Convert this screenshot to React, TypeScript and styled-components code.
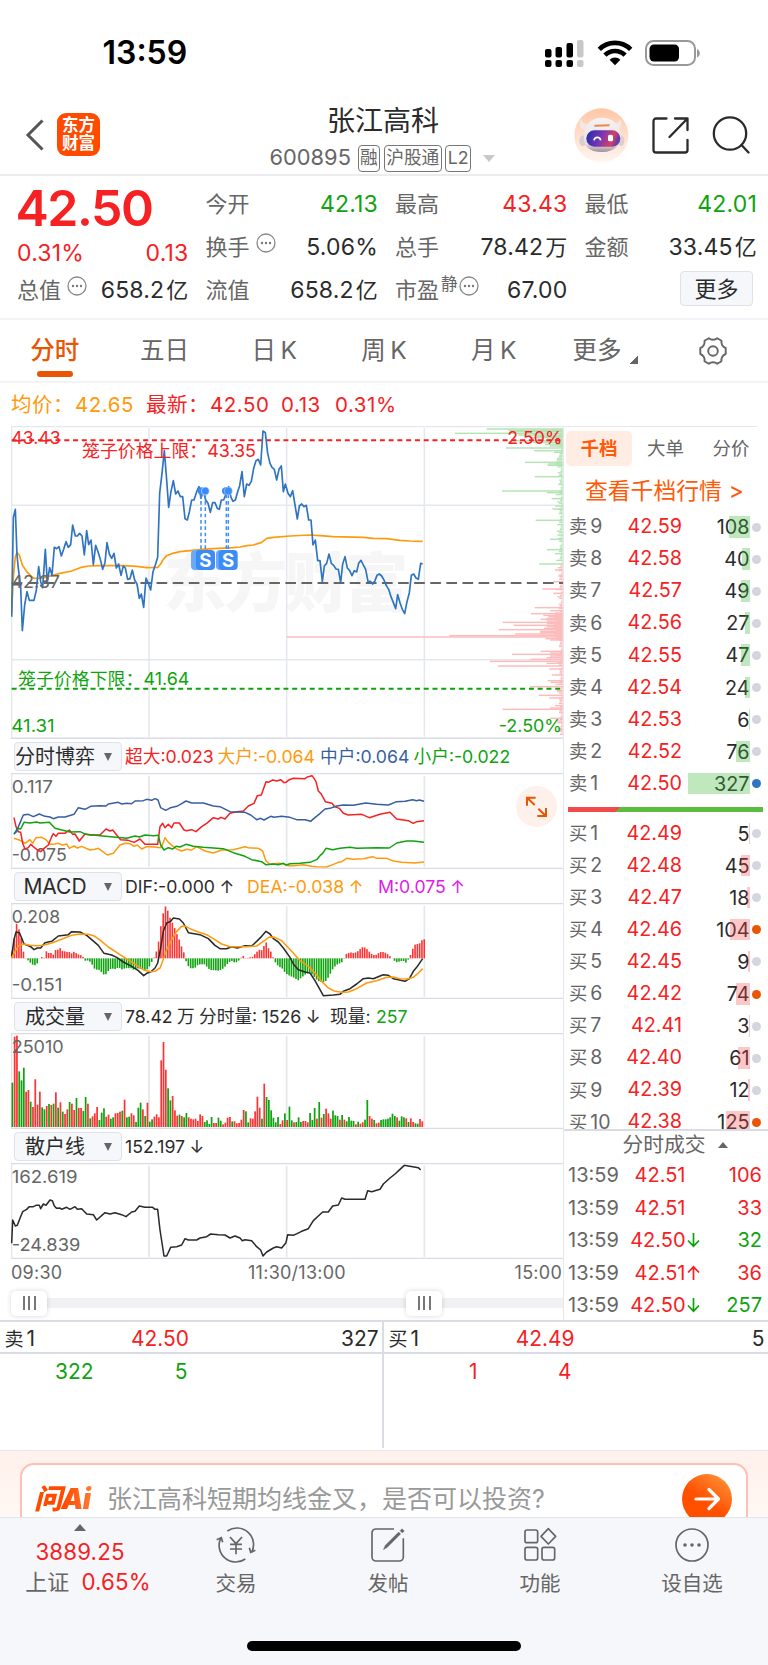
import React from "react";
import styled, { createGlobalStyle, css } from "styled-components";

const RED = "#f62122";
const GREEN = "#0fa30f";
const ORANGE = "#ea5504";
const AMBER = "#ff9a0d";
const BLUE = "#2f74c0";
const NAVY = "#375f9f";
const GREY = "#666666";
const INK = "#2b2b2b";
const GRID = "#e3e7ee";
const LINE = "#d9dce4";

const FONT = `Inter, "Noto Sans CJK SC", sans-serif`;

const Global = createGlobalStyle`
  *, *::before, *::after { box-sizing: border-box; }
  body {
    margin: 0;
    background: #fff;
    font-family: ${FONT};
    line-height: 1;
    color: ${INK};
    white-space: nowrap;
  }
  svg { display: block; }
  svg text { font-family: ${FONT}; }
`;

const Screen = styled.div`
  width: 768px;
  height: 1665px;
  display: flex;
  flex-direction: column;
  overflow: hidden;
  background: #fff;
`;

/* ---------- status bar ---------- */
const StatusBar = styled.div`
  height: 100px;
  flex: none;
  display: flex;
  align-items: center;
  padding: 5px 67px 0 102.5px;
`;
const Clock = styled.div`
  font-size: 32px;
  font-weight: 600;
  letter-spacing: 0;
  flex: 1;
  color: #000;
`;

/* ---------- title bar ---------- */
const TitleBar = styled.header`
  height: 76px;
  flex: none;
  display: grid;
  grid-template-columns: 232px 1fr 232px;
  border-bottom: 2px solid #ececec;
`;
const TitleLeft = styled.div`
  display: flex;
  align-items: center;
  gap: 13px;
  padding: 0 0 4px 25px;
`;
const Brand = styled.div`
  width: 43px;
  height: 43px;
  border-radius: 9px;
  background: #ff4a00;
  color: #fff;
  font-size: 16.5px;
  font-weight: 700;
  line-height: 17.5px;
  text-align: center;
  padding-top: 4px;
  margin-top: -1px;
`;
const TitleMid = styled.div`
  display: flex;
  flex-direction: column;
  align-items: center;
  padding: 6px 2px 0 0;
`;
const StockName = styled.h1`
  margin: 0;
  font-size: 28px;
  font-weight: 400;
  line-height: 30px;
`;
const StockMeta = styled.div`
  display: flex;
  align-items: center;
  height: 28px;
  margin-top: 8px;
  gap: 3.5px;
  padding-right: 2px;
  color: ${GREY};
`;
const Code = styled.span`
  font-size: 21.8px;
  letter-spacing: 0.05px;
  margin-right: 3px;
`;
const Tag = styled.span`
  height: 27px;
  padding: 0 1.5px;
  display: flex;
  align-items: center;
  border: 1.5px solid #777;
  border-radius: 4px;
  font-size: 17.7px;
`;
const Caret = styled.i<{ $w: number; $h: number; $up?: boolean; $c?: string }>`
  width: 0;
  height: 0;
  flex: none;
  border: solid transparent;
  border-width: 0 ${(p) => p.$w / 2}px;
  ${(p) =>
    p.$up
      ? css`border-bottom: ${p.$h}px solid ${p.$c || GREY};`
      : css`border-top: ${p.$h}px solid ${p.$c || GREY};`}
`;
const MetaCaret = styled(Caret)`
  margin-left: 8px;
`;
const TitleRight = styled.div`
  display: grid;
  grid-template-columns: 55px 37px 38px;
  align-items: center;
  justify-content: end;
  column-gap: 23px;
  padding: 0 18px 4px 0;
`;

/* ---------- quote panel ---------- */
const Quote = styled.section`
  height: 144px;
  flex: none;
  display: grid;
  grid-template-columns: 171.5px repeat(3, 172.5px);
  column-gap: 17px;
  padding: 6.5px 0 0 17px;
  border-bottom: 2px solid #f3f3f5;
`;
const QuoteCol = styled.div`
  display: grid;
  grid-template-rows: repeat(3, 43px);
`;
const QuoteCell = styled.div<{ $low?: boolean }>`
  display: flex;
  align-items: center;
  font-size: 22px;
  color: ${GREY};
  padding-top: ${(p) => (p.$low ? 13 : 0)}px;
`;
const Last = styled.div`
  color: ${RED};
  font-size: 50px;
  font-weight: 600;
  letter-spacing: -1.5px;
  margin-left: -1.5px;
`;
const Val = styled.span<{ $c?: string; $left?: boolean }>`
  margin-left: ${(p) => (p.$left ? 0 : "auto")};
  color: ${(p) => p.$c || INK};
  font-size: 23px;
  letter-spacing: 0.2px;
`;
const Unit = styled.span`
  margin-left: 2px;
  font-size: 22px;
`;
const Sup = styled.sup`
  font-size: 16.5px;
  line-height: 1;
  margin: -12px -5px 0 2px;
`;
const HintWrap = styled.span`
  margin: -9px 0 0 6px;
`;
const MoreButton = styled.button`
  margin-left: auto;
  margin-right: 4px;
  margin-top: -3px;
  width: 73px;
  height: 35px;
  border: 1.5px solid #dfe2e8;
  border-radius: 4px;
  background: #f6f7fa;
  font: 22px ${FONT};
  line-height: 1;
  padding: 0;
  color: ${INK};
`;

/* ---------- period tabs ---------- */
const Tabs = styled.nav`
  height: 63px;
  flex: none;
  display: grid;
  grid-template-columns: repeat(7, 1fr);
  border-bottom: 2px solid #f3f3f5;
`;
const Tab = styled.div<{ $on?: boolean }>`
  display: flex;
  align-items: center;
  justify-content: center;
  position: relative;
  font-size: 24.5px;
  word-spacing: -2.5px;
  color: ${(p) => (p.$on ? ORANGE : GREY)};
  font-weight: ${(p) => (p.$on ? 500 : 400)};
  ${(p) =>
    p.$on &&
    css`
      &::after {
        content: "";
        position: absolute;
        left: 37px;
        bottom: 4px;
        width: 36px;
        height: 6px;
        border-radius: 3px;
        background: ${ORANGE};
      }
    `}
`;
const Corner = styled.i`
  width: 8px;
  height: 8px;
  margin: 18px -4px 0 9px;
  background: linear-gradient(135deg, transparent 50%, ${GREY} 50%);
`;

const Summary = styled.div`
  height: 43px;
  flex: none;
  display: flex;
  align-items: center;
  padding: 1px 0 0 11px;
  font-size: 20.5px;
  letter-spacing: 0.55px;
  color: ${RED};
`;
const SumItem = styled.span<{ $w: number; $c?: string }>`
  width: ${(p) => p.$w}px;
  color: ${(p) => p.$c || RED};
`;

/* ---------- main area ---------- */
const Main = styled.main`
  height: 896px;
  flex: none;
  display: grid;
  grid-template-columns: 563px 205px;
  border-bottom: 2px solid ${LINE};
`;
const Charts = styled.div`
  position: relative;
  padding-left: 11px;
  display: flex;
  flex-direction: column;
`;
const PaneHead = styled.div`
  height: 34px;
  display: flex;
  align-items: center;
  padding: 2px 0 0 3px;
  font-size: 17.7px;
`;
const Picker = styled.div<{ $size: number }>`
  width: 108px;
  height: 29px;
  margin: -1px 3px 0 0;
  display: grid;
  grid-template-columns: 80px 25px;
  align-items: center;
  justify-items: center;
  background: #f6f7fa;
  border: 1.5px solid #dfe2e8;
  border-radius: 4px;
  font-size: ${(p) => p.$size}px;
`;
const Stat = styled.span<{ $c?: string; $w?: number }>`
  color: ${(p) => p.$c || INK};
  word-spacing: -0.5px;
  ${(p) => p.$w && css`width: ${p.$w}px;`}
`;
const Axis = styled.div`
  display: grid;
  grid-template-columns: 1fr 1fr 1fr;
  height: 28px;
  align-items: center;
  padding-right: 1px;
  font-size: 18px;
  letter-spacing: 0.25px;
  color: ${GREY};
  & > :nth-child(2) { text-align: center; padding-left: 21px; }
  & > :nth-child(3) { text-align: right; }
`;
const SliderTrack = styled.div`
  height: 10px;
  margin-top: 11px;
  background: #f1f1f4;
  display: flex;
  align-items: center;
  gap: 359px;
`;
const Handle = styled.div`
  width: 36px;
  height: 25px;
  flex: none;
  border-radius: 5px;
  background: #fff;
  box-shadow: 0 0 5px rgba(0, 0, 0, 0.16);
  display: flex;
  align-items: center;
  justify-content: center;
  gap: 3.5px;
  i { width: 2px; height: 14px; background: #777; }
`;
const Expand = styled.button`
  position: absolute;
  left: 516px;
  top: 360px;
  width: 41px;
  height: 41px;
  border: 0;
  padding: 0;
  border-radius: 50%;
  background: #fef0ea;
`;

/* ---------- order book ---------- */
const Book = styled.aside`
  border-left: 1.5px solid ${GRID};
  display: flex;
  flex-direction: column;
  overflow: hidden;
`;
const BookTabs = styled.div`
  height: 44px;
  flex: none;
  margin-right: 11px;
  border-top: 1.5px solid ${GRID};
  display: grid;
  grid-template-columns: 70px 63px 68px;
  align-items: center;
  justify-items: center;
  font-size: 18.5px;
  color: ${GREY};
`;
const Pill = styled.span`
  width: 66px;
  height: 35px;
  display: flex;
  align-items: center;
  justify-content: center;
  background: #ffece3;
  border-radius: 5px;
  color: #ff5a08;
  font-weight: 600;
`;
const BookLink = styled.div`
  height: 41px;
  flex: none;
  padding: 1px 0 0 21px;
  display: flex;
  align-items: center;
  gap: 7px;
  font-size: 22.8px;
  color: #ff5a08;
`;
const Level = styled.div`
  height: 32.1px;
  flex: none;
  display: grid;
  grid-template-columns: 52px 61px 67.5px 12px;
  align-items: center;
  padding-left: 5px;
  font-size: 19.8px;
`;
const LevelName = styled.span`
  color: ${GREY};
  font-size: 19.5px;
  b { font-weight: 400; font-size: 18.3px; margin-right: 3px; }
`;
const Price = styled.span`
  color: ${RED};
  text-align: right;
`;
const Qty = styled.span`
  position: relative;
  text-align: right;
  line-height: 22px;
`;
const QtyBar = styled.i<{ $sell: boolean }>`
  position: absolute;
  right: -0.5px;
  top: 0;
  height: 21.5px;
  background: ${(p) => (p.$sell ? "rgba(60,184,60,.33)" : "rgba(250,70,70,.3)")};
`;
const Dot = styled.i<{ $c: string }>`
  width: 9px;
  height: 9px;
  margin-left: 2px;
  border-radius: 50%;
  background: ${(p) => p.$c};
`;
const Asks = styled.div`
  height: 288.5px;
  flex: none;
`;
const Ratio = styled.div`
  height: 5px;
  margin: 7px 5px 6px 3.5px;
  flex: none;
  background: linear-gradient(135deg, #f04a4a 37px, #5bbd3f 37.5px);
`;
const Bids = styled.div`
  height: 313.5px;
  flex: none;
  overflow: hidden;
  border-bottom: 2px solid ${LINE};
`;
const TradesHead = styled.div`
  height: 28px;
  flex: none;
  display: flex;
  align-items: center;
  justify-content: center;
  gap: 12px;
  padding: 0 0 0 18px;
  font-size: 20.8px;
  color: ${GREY};
`;
const Trade = styled.div`
  height: 32.5px;
  flex: none;
  display: grid;
  grid-template-columns: 56px 61.5px 14px 1fr;
  align-items: center;
  padding: 0 6px 0 4px;
  font-size: 20px;
  color: ${GREY};
`;
const Right = styled.span<{ $c: string }>`
  text-align: right;
  color: ${(p) => p.$c};
`;

/* ---------- queue ---------- */
const Queue = styled.section`
  height: 128.5px;
  flex: none;
  display: grid;
  grid-template-columns: 384px 384px;
  border-bottom: 1.5px solid #e8e8ec;
`;
const QueueSide = styled.div`
  height: 126px;
  &:first-child { border-right: 2px solid ${LINE}; }
`;
const QueueHead = styled.div`
  height: 32px;
  display: grid;
  grid-template-columns: 60px 1fr 60px;
  align-items: center;
  padding: 5px 3.5px 0 4.5px;
  font-size: 20.9px;
  border-bottom: 2px solid ${LINE};
  & > :nth-child(2) { color: ${RED}; text-align: center; padding-right: 63px; }
  & > :nth-child(3) { text-align: right; }
  b { font-weight: 400; font-size: 19px; margin-right: 3px; }
`;
const QueueRow = styled.div<{ $c: string }>`
  height: 37.5px;
  display: grid;
  grid-template-columns: 93.5px 94px;
  align-items: center;
  text-align: right;
  font-size: 20.9px;
  color: ${(p) => p.$c};
`;

/* ---------- ask bar ---------- */
const AskArea = styled.section`
  height: 66.5px;
  flex: none;
  padding: 12.5px 20px 0;
  overflow: hidden;
  background: linear-gradient(#fff0ea, #fff8f5);
`;
const AskCard = styled.div`
  height: 78px;
  display: flex;
  align-items: flex-start;
  border: 2px solid #ffbfb3;
  border-radius: 14px;
  background: #fff;
  padding: 9px 14px 0 12px;
`;
const AskLogo = styled.div`
  width: 73px;
  padding-top: 11px;
  font-size: 28px;
  font-weight: 900;
  font-style: italic;
  letter-spacing: -0.8px;
  background: linear-gradient(90deg, #ff4a00 40%, #ff9350);
  background-clip: text;
  -webkit-background-clip: text;
  color: transparent;
`;
const AskText = styled.div`
  flex: 1;
  padding-top: 13px;
  font-size: 25px;
  color: #999;
`;
const Go = styled.div`
  width: 50px;
  height: 50px;
  border-radius: 50%;
  background: linear-gradient(35deg, #ff5000 45%, #ff9c40);
`;

/* ---------- bottom bar ---------- */
const BottomBar = styled.footer`
  flex: 1;
  border-top: 1.5px solid #e4e5ea;
  background: #f6f7fa;
`;
const NavRow = styled.div`
  height: 123px;
  display: grid;
  grid-template-columns: 160px repeat(4, 152px);
`;
const IndexCell = styled.div`
  display: flex;
  flex-direction: column;
  align-items: center;
  padding-top: 6px;
  color: ${RED};
  font-size: 22.3px;
  letter-spacing: 0.15px;
`;
const IndexValue = styled.div`
  margin: 9.5px 0 8px;
`;
const IndexLine = styled.div`
  display: flex;
  gap: 12px;
  padding-left: 16px;
  line-height: 22px;
  span { color: ${GREY}; font-size: 22px; }
`;
const NavItem = styled.div`
  display: flex;
  flex-direction: column;
  align-items: center;
  padding-top: 9px;
  gap: 10.5px;
  color: ${GREY};
  font-size: 20.5px;
`;
const HomeIndicator = styled.div`
  width: 274px;
  height: 10px;
  border-radius: 5px;
  background: #000;
  margin: 0 auto;
`;

/* ---------- data ---------- */
// Chart geometry is drawn at three units per pixel.
const PRICE =
  "35,590 40,292 46,268 51,405 55,445 62,500 67,632 74,555 81,515 88,541 102,541 109,510 116,440 122,485 128,503 136,388 142,487 149,443 156,465 163,382 170,386 177,380 184,408 191,388 198,365 205,382 212,374 218,315 226,348 232,348 239,340 246,348 253,405 260,332 266,374 273,360 280,434 287,376 294,395 301,418 308,448 315,428 321,368 328,402 335,415 342,400 349,444 356,432 363,466 370,438 376,444 383,478 390,476 397,450 404,480 411,492 418,535 424,522 431,562 438,474 445,490 452,510 459,455 466,435 473,412 479,220 486,160 493,92 500,180 506,262 513,215 520,182 527,222 534,213 541,230 548,230 555,296 562,300 568,276 575,240 582,240 590,215 597,200 603,235 610,212 617,240 624,250 631,277 638,248 645,248 652,265 658,268 664,240 671,240 678,222 686,200 693,232 699,244 706,240 713,215 719,197 726,155 733,230 740,192 747,196 754,184 761,145 768,122 775,118 782,135 789,33 796,38 803,100 810,130 816,142 823,148 830,180 837,148 844,138 850,215 856,192 864,220 871,230 878,212 885,255 892,297 898,258 905,252 912,260 919,256 926,300 933,300 939,375 946,360 953,422 960,422 967,485 973,438 980,430 987,402 994,430 1001,436 1008,447 1015,448 1022,488 1028,432 1035,410 1042,444 1049,452 1056,467 1063,452 1070,456 1076,430 1083,421 1090,435 1097,448 1104,485 1111,484 1118,492 1125,482 1131,466 1138,462 1145,468 1152,480 1159,497 1166,508 1173,530 1180,548 1187,566 1193,524 1200,548 1207,568 1214,581 1221,545 1228,518 1234,466 1241,462 1248,474 1255,478 1262,430 1268,432";
const AVERAGE =
  "35,580 40,470 46,410 51,398 58,405 67,435 80,455 95,470 102,475 130,474 150,468 180,460 215,453 240,443 265,438 300,437 370,437 410,439 440,443 473,442 482,432 490,418 500,407 515,401 540,395 570,392 600,389 640,386 700,383 720,381 740,377 760,375 785,367 800,355 820,352 870,348 930,345 960,347 1000,350 1090,352 1120,355 1160,356 1200,361 1230,363 1268,364";
const FLOW_RED =
  "42,248 48,275 55,290 62,292 68,325 75,342 85,338 92,328 100,335 112,345 122,350 135,338 145,330 155,305 160,296 168,304 175,295 195,295 208,285 218,298 225,297 238,318 255,297 270,300 300,300 318,282 330,288 338,285 350,300 362,314 385,316 402,322 420,312 435,328 450,328 473,328 480,275 488,265 495,278 505,268 515,278 522,264 538,264 552,285 560,287 575,284 588,290 605,275 620,265 640,248 655,252 663,247 675,252 690,235 710,230 730,228 745,213 762,205 772,182 784,180 798,140 805,142 818,135 830,138 842,134 852,143 858,142 868,134 880,130 915,131 922,126 930,124 936,122 942,130 948,140 955,168 963,176 976,200 996,205 1004,215 1018,220 1030,235 1045,240 1085,238 1108,248 1140,238 1170,232 1190,252 1210,255 1225,257 1240,265 1250,260 1272,257";
const FLOW_BLUE =
  "42,296 50,290 58,268 70,240 85,238 100,245 118,237 135,244 150,246 160,251 175,246 195,246 222,238 235,218 255,223 272,214 300,212 318,213 325,207 355,202 365,207 380,205 395,206 405,198 430,197 440,193 455,196 465,191 474,195 482,218 497,226 512,218 530,214 545,206 558,198 575,204 610,204 640,213 660,215 690,230 735,232 752,240 770,254 782,250 792,255 812,244 822,247 845,244 870,247 890,254 915,254 932,259 942,250 957,238 975,222 990,220 1010,213 1030,210 1060,211 1097,204 1130,208 1165,210 1190,200 1215,199 1238,194 1250,197 1258,195 1272,199";
const FLOW_GREEN =
  "42,298 52,280 62,282 72,262 90,264 110,261 120,264 148,262 165,280 185,285 210,291 240,290 258,298 300,302 365,308 380,310 405,303 418,306 435,300 460,302 475,301 482,330 492,345 505,338 518,342 528,334 540,336 558,328 580,334 610,337 670,341 700,353 735,364 755,374 785,380 797,389 820,387 835,389 850,385 858,390 870,386 900,385 930,382 950,374 960,362 968,355 978,340 998,344 1020,340 1050,337 1070,340 1130,338 1168,339 1190,324 1220,318 1240,318 1272,322";
const FLOW_AMBER =
  "42,310 55,314 68,320 75,325 90,314 98,325 108,308 125,307 138,314 150,328 165,327 175,325 188,330 200,327 208,340 222,333 232,339 245,334 270,345 285,343 295,340 322,360 340,355 360,330 375,325 390,326 402,334 412,330 425,342 440,335 455,335 482,338 488,328 495,308 505,322 520,335 530,342 545,348 560,343 575,345 590,335 615,348 640,354 665,345 700,344 735,335 745,338 775,340 788,348 798,378 810,388 835,385 848,386 865,392 880,392 910,389 935,394 950,395 980,396 1000,388 1015,382 1025,380 1040,370 1060,373 1090,371 1118,365 1130,370 1160,370 1180,378 1205,382 1245,384 1272,381";
const DIF =
  "35,665 42,615 48,592 58,594 65,610 72,628 82,632 92,636 102,645 112,640 122,640 135,624 155,620 175,604 205,600 215,591 240,592 260,602 275,615 295,632 312,656 335,661 350,668 370,682 395,695 415,708 431,723 440,716 452,712 465,700 473,685 482,640 490,590 500,565 512,560 520,550 538,553 550,565 565,594 600,600 625,612 645,632 660,642 680,642 695,636 712,640 735,633 755,634 770,620 785,605 798,590 810,598 820,612 835,622 850,640 870,668 880,688 895,705 915,712 930,715 945,738 960,765 970,783 1000,781 1020,779 1030,770 1050,762 1070,748 1090,732 1105,730 1120,732 1140,724 1150,720 1165,722 1180,732 1195,735 1215,740 1228,732 1240,710 1250,698 1268,672";
const DEA =
  "35,670 45,650 55,634 68,628 90,632 110,633 130,632 155,625 185,614 215,602 240,598 265,599 285,605 305,620 325,637 360,660 400,685 430,705 450,711 465,710 480,700 488,680 500,645 515,615 530,590 545,575 555,574 570,582 595,592 620,600 640,612 665,628 690,636 740,636 770,634 790,620 808,607 825,608 845,618 860,634 880,655 900,678 925,695 945,715 965,740 985,760 1005,770 1025,773 1045,772 1070,762 1100,745 1130,738 1160,728 1180,727 1200,732 1222,733 1240,728 1255,715 1268,702";
const MACD_ENVELOPE =
  "36,650 43,610 50,566 57,585 64,612 71,655 78,672 84,677 91,684 98,690 105,692 112,686 118,672 125,667 132,670 139,650 146,655 153,655 160,660 167,645 174,645 181,640 188,650 195,650 202,652 209,652 216,657 223,650 230,657 237,660 244,662 250,668 257,680 264,677 271,682 278,692 285,705 292,705 299,706 306,714 313,722 320,717 327,705 334,702 341,702 348,704 355,697 362,702 369,706 376,698 383,703 390,698 397,704 404,706 411,700 418,704 425,700 432,708 439,706 446,700 453,685 460,674 467,655 473,640 480,590 487,548 494,513 501,520 508,545 515,560 522,575 529,595 536,610 543,632 550,648 556,672 560,686 567,698 574,702 581,700 588,698 595,688 602,690 609,688 616,690 623,700 630,705 637,707 644,706 651,708 658,708 665,704 672,700 679,690 686,685 693,677 700,682 707,684 714,680 721,672 728,662 735,670 742,670 749,668 756,668 763,660 770,652 777,645 784,648 791,635 798,622 805,640 812,650 818,665 824,680 831,690 838,697 845,699 852,710 860,718 870,724 880,728 895,737 905,728 915,720 930,712 950,735 960,742 975,742 985,728 1000,700 1010,690 1025,683 1033,671 1038,658 1045,655 1052,653 1060,655 1068,653 1076,648 1083,640 1090,636 1097,640 1104,646 1111,655 1118,660 1126,662 1133,657 1140,652 1150,652 1158,655 1165,660 1172,667 1180,675 1188,683 1196,681 1204,679 1212,679 1218,684 1225,674 1230,665 1237,645 1244,630 1252,628 1258,627 1265,617 1272,614";
const VOLUME =
  "g248 r110 r107 g214 g241 g203 r275 r270 g305 r321 r238 r314 r275 g322 g328 r318 g312 r315 g311 r277 g323 r307 g335 r342 r328 g306 r311 r330 g294 r324 r324 g333 g291 r311 g355 r349 r340 r321 g360 g338 g325 r350 r344 g356 g352 r340 r339 r335 g332 r299 g352 g350 r340 r346 g366 g323 g308 r328 g348 r308 g365 g358 r350 r343 r352 r181 r126 r209 g265 g301 r288 r331 r347 g344 r348 g352 g339 r352 r356 r358 r356 r363 r343 r348 g366 g361 g372 g351 r369 r369 g353 g362 r373 r368 r353 r351 g364 r364 r370 r369 r359 r330 g334 g367 r355 r356 r334 r290 r323 g356 r251 g291 g300 g331 g353 g367 g351 r372 r361 g340 r360 g320 g361 r367 g366 g352 g366 r363 r363 r367 g339 g360 g324 r356 g306 r353 g342 r326 r340 r356 g332 g346 g348 r359 g345 r359 g364 g351 g362 g363 r373 g365 r371 r367 g359 g300 r348 r356 g360 r370 r368 g360 g358 g358 g356 g352 g341 g348 r352 g362 g349 g352 r355 g366 r355 r366 g370 g371 r357 r364";
const RETAIL =
  "35,730 38,660 46,678 52,676 60,655 68,635 80,628 88,620 100,620 108,616 118,616 122,626 130,612 138,616 150,600 157,602 163,618 170,625 180,624 185,628 200,622 210,628 225,620 232,628 245,626 260,642 280,644 290,660 315,638 330,642 345,638 365,644 378,650 395,636 405,634 418,618 435,622 458,622 465,628 473,628 480,690 492,768 500,768 512,742 530,740 545,735 555,716 565,720 590,720 600,714 620,710 632,702 655,704 675,705 690,714 705,708 720,714 727,722 735,719 755,722 770,740 782,750 789,768 800,756 820,744 830,740 845,744 858,728 863,704 880,706 905,694 925,686 940,662 955,648 968,636 985,636 998,618 1015,615 1025,594 1035,598 1095,598 1103,572 1115,575 1140,568 1150,552 1170,534 1185,522 1200,508 1213,496 1225,498 1255,503 1262,510";

// Resting orders by price: [y, left end of the bar].
const DEPTH: [number, number][] = [
  [27, 1460], [31, 1525], [35, 1540], [40, 1364], [45, 1555], [49, 1610], [53, 1590], [58, 1640], [62, 1540], [67, 1600], [73, 1635], [78, 1650], [84, 1518], [92, 1602], [97, 1662],
  [127, 1575], [132, 1645], [136, 1642], [170, 1604], [193, 1675], [213, 1506], [218, 1640], [236, 1655], [258, 1665], [267, 1657], [301, 1607], [314, 1672], [345, 1672], [358, 1650], [389, 1641], [401, 1665], [432, 1618],
  [450, 1665], [468, 1675], [485, 1660], [507, 1627], [520, 1660], [563, 1604], [572, 1650], [581, 1593], [586, 1630], [590, 1645], [595, 1640], [598, 1622], [603, 1640], [607, 1508], [611, 1640], [616, 1541], [620, 1640], [625, 1632], [629, 1496], [634, 1620], [638, 1620], [642, 1546], [647, 1348], [651, 860], [656, 1637], [660, 1650],
  [694, 1622], [699, 1650], [703, 1536], [708, 1650], [713, 1640], [718, 1592], [724, 1470], [730, 1640], [738, 1494], [747, 1648], [765, 1655], [782, 1643], [787, 1652], [800, 1590], [812, 1670], [826, 1616], [834, 1648], [857, 1665], [864, 1650], [868, 1508], [878, 1678], [895, 1650], [908, 1672], [930, 1675], [943, 1680],
];

const parse = (s: string) => s.split(" ").map((p) => p.split(",").map(Number));
const envelope = parse(MACD_ENVELOPE);
const sample = (x: number) => {
  const i = envelope.findIndex((p) => p[0] >= x);
  if (i <= 0) return envelope[i === 0 ? 0 : envelope.length - 1][1];
  const [x0, y0] = envelope[i - 1];
  const [x1, y1] = envelope[i];
  return y0 + ((y1 - y0) * (x - x0)) / (x1 - x0);
};
const ladder = Array.from({ length: 210 }, (_, i) => ({
  y: 27 + i * 4.38,
  w: 3 + ((i * 7919) % 13) * (i % 5 === 0 ? 1.5 : 0.7) + (i > 125 && i < 145 ? 16 : 0) + (i > 19 && i < 27 ? 12 : 0),
}));

/* ---------- chart pieces ---------- */
type PaneProps = { top: number; h: number; children: React.ReactNode };
const Pane = ({ top, h, children }: PaneProps) => (
  <svg width={552} height={h} viewBox={`33 ${top} 1656 ${h * 3}`}>
    <g stroke={GRID} strokeWidth={5}>
      <path d={`M447 ${top + 8}V${top + h * 3 - 6}M860 ${top + 8}V${top + h * 3 - 6}M1273 ${top + 8}V${top + h * 3 - 6}`} />
      <path d={`M35 ${top}V${top + h * 3}`} strokeWidth={4} />
    </g>
    {children}
    <path d={`M33 ${top + 2}H1689M33 ${top + h * 3 - 2}H1689`} stroke={LINE} strokeWidth={4} />
  </svg>
);
type LabelProps = { x: number; y: number; w: number; c?: string; size?: number; children: string };
const Label = ({ x, y, w, c = GREY, size = 52, children }: LabelProps) => (
  <text x={x} y={y} fill={c} fontSize={size} textLength={w} lengthAdjust="spacingAndGlyphs">
    {children}
  </text>
);
const Curve = ({ d, c, w = 4.5 }: { d: string; c: string; w?: number }) => (
  <polyline points={d} fill="none" stroke={c} strokeWidth={w} strokeLinejoin="round" />
);
const Marker = ({ x, back }: { x: number; back: number }) => (
  <g>
    <rect x={x - back} y={390} width={57} height={60} rx={12} fill="#6aa9f7" />
    <rect x={x} y={390} width={57} height={60} rx={12} fill="#3c8cf8" />
    <text x={x + 28} y={440} fontSize={56} fontWeight={700} fill="#fff" textAnchor="middle">S</text>
  </g>
);

const PriceChart = () => (
  <svg width={552} height={313} viewBox="33 18 1656 939">
    <text x={490} y={558} fontSize={190} fontWeight={900} fill="#f6f6f7" textLength={735}>
      东方财富
    </text>
    <path d="M447 24V950M860 24V950M1273 24V950M33 256H1689M33 719H1689" stroke={GRID} strokeWidth={4.5} />
    <path d="M35 18V957M33 20H1689" stroke={GRID} strokeWidth={4} />
    <path d="M33 955H1689" stroke={LINE} strokeWidth={5} />
    {ladder.map((r) => (
      <rect key={r.y} x={1688 - r.w} y={r.y - 2} width={r.w} height={3.8} fill={r.y < 436 ? "#b4e3b4" : "#fdbcbc"} />
    ))}
    {DEPTH.map(([y, x]) => (
      <rect key={y} x={x} y={y - 2.2} width={1688 - x} height={4.4} fill={y < 436 ? "#b4e3b4" : "#fdbcbc"} />
    ))}
    <path d="M35 489H1689" stroke={GREY} strokeWidth={6} strokeDasharray="32 16.3" />
    <path d="M35 60.5H1689" stroke={RED} strokeWidth={6} strokeDasharray="15 11.3" />
    <path d="M35 806H1689" stroke={GREEN} strokeWidth={6} strokeDasharray="15 11.3" />
    <Curve d={AVERAGE} c={AMBER} w={5} />
    <Curve d={PRICE} c={BLUE} w={5} />
    <g stroke="#3c8cf8" strokeWidth={4.5} strokeDasharray="11 8">
      <path d="M603 224V390M616 224V390M679 224V390M685 224V390" />
    </g>
    <g fill="#3c8cf8">
      <circle cx={604} cy={213} r={11} />
      <circle cx={616} cy={213} r={12} stroke="#fff" strokeWidth={1.5} />
      <circle cx={677} cy={213} r={11} />
      <circle cx={685} cy={213} r={12} stroke="#bcd8fd" strokeWidth={1.5} />
    </g>
    <Marker x={588} back={15} />
    <Marker x={656} back={8} />
    <Label x={34} y={73} w={148} c={RED}>43.43</Label>
    <Label x={34} y={504} w={146}>42.37</Label>
    <Label x={34} y={936} w={130} c={GREEN}>41.31</Label>
    <Label x={1522} y={73} w={165} c={RED}>2.50%</Label>
    <Label x={1496} y={936} w={190} c={GREEN}>-2.50%</Label>
    <Label x={246} y={112} w={522} c={RED}>笼子价格上限：43.35</Label>
    <Label x={54} y={795} w={514} c={GREEN}>笼子价格下限：41.64</Label>
  </svg>
);

const FlowChart = () => (
  <Pane top={114} h={96}>
    <Label x={35} y={175} w={124}>0.117</Label>
    <Label x={35} y={379} w={165}>-0.075</Label>
    <Curve d={FLOW_AMBER} c={AMBER} />
    <Curve d={FLOW_RED} c={RED} />
    <Curve d={FLOW_GREEN} c={GREEN} />
    <Curve d={FLOW_BLUE} c={NAVY} />
  </Pane>
);

const MacdChart = () => (
  <Pane top={505} h={96}>
    <Label x={35} y={565} w={145}>0.208</Label>
    <Label x={35} y={768} w={152}>-0.151</Label>
    {Array.from({ length: 181 }, (_, i) => {
      const x = 36 + i * 6.87;
      const y = sample(x);
      return (
        <rect key={i} x={x - 2.3} y={Math.min(y, 671)} width={4.8} height={Math.abs(y - 671)} fill={y < 671 ? "#fb3434" : GREEN} />
      );
    })}
    <Curve d={DIF} c="#2a2a2a" w={4.6} />
    <Curve d={DEA} c={AMBER} w={4.6} />
  </Pane>
);

const VolumeChart = () => (
  <Pane top={99} h={96}>
    {VOLUME.split(" ").map((v, i) => {
      const y = Number(v.slice(1));
      return <rect key={i} x={34.5 + i * 6.87} y={y} width={5.2} height={381 - y} fill={v[0] === "r" ? "#fb3434" : GREEN} />;
    })}
    <Label x={35} y={158} w={156}>25010</Label>
  </Pane>
);

const RetailChart = () => (
  <Pane top={489} h={96}>
    <Curve d={RETAIL} c="#2a2a2a" w={4.6} />
    <Label x={35} y={548} w={198}>162.619</Label>
    <Label x={35} y={752} w={206}>-24.839</Label>
  </Pane>
);

/* ---------- icons ---------- */
const StatusIcons = () => (
  <svg width={157} height={28} viewBox="0 0 157 28">
    <g fill="#000">
      <rect x={1} y={10} width={6.5} height={8.5} rx={2} />
      <rect x={11.5} y={8} width={6.5} height={10.5} rx={2} />
      <rect x={22.5} y={4} width={6.5} height={14.5} rx={2} />
      <rect x={33} y={1} width={6.5} height={17.5} rx={2} fill="#c8c8c8" />
      <rect x={1} y={21} width={6.5} height={7} rx={2} />
      <rect x={11.5} y={21} width={6.5} height={7} rx={2} />
      <rect x={22.5} y={21} width={6.5} height={7} rx={2} />
      <rect x={33} y={21} width={6.5} height={7} rx={2} fill="#c8c8c8" />
    </g>
    <g fill="none" stroke="#000" strokeWidth={4.6}>
      <path d="M55.3 10.3a22.3 22.3 0 0 1 31.4 0" />
      <path d="M60.9 16.2a14.3 14.3 0 0 1 20.2 0" />
    </g>
    <path d="M71 26.2l-5.4-5.4a7.7 7.7 0 0 1 10.8 0z" />
    <rect x={102} y={2} width={49} height={24} rx={7.5} fill="none" stroke="#999" strokeWidth={2} />
    <rect x={105.5} y={5.5} width={29.5} height={17} rx={4.5} />
    <path d="M153 10v8.5c1.8-.7 2.8-2.3 2.8-4.25s-1-3.5-2.8-4.25z" fill="#999" />
  </svg>
);
const BackIcon = () => (
  <svg width={19} height={32} viewBox="0 0 19 32" fill="none" stroke="#555" strokeWidth={3}>
    <path d="M17.5 1.5L3 16l14.5 14.5" />
  </svg>
);
const Robot = () => (
  <svg width={55} height={55} viewBox="0 0 165 165">
    <defs>
      <linearGradient id="halo" x1="0" y1="0" x2="0" y2="1">
        <stop offset="0" stopColor="#ffc6a6" />
        <stop offset="1" stopColor="#fff6f1" />
      </linearGradient>
      <linearGradient id="visor" x1="0" y1="0" x2="1" y2="0.2">
        <stop offset="0" stopColor="#1d2fa8" />
        <stop offset="0.5" stopColor="#7b35b5" />
        <stop offset="0.85" stopColor="#d6425f" />
        <stop offset="1" stopColor="#6a3aa8" />
      </linearGradient>
      <linearGradient id="shell" x1="0" y1="0" x2="0" y2="1">
        <stop offset="0" stopColor="#f7f3f2" />
        <stop offset="0.75" stopColor="#e8e3e4" />
        <stop offset="1" stopColor="#9b9199" />
      </linearGradient>
    </defs>
    <circle cx={82} cy={82} r={81} fill="url(#halo)" />
    <path d="M20 32c-6 14-4 30 12 34l12-16c-12-2-20-8-24-18zM140 34c4 14 2 26-10 32l-12-18c12-1 19-6 22-14z" fill="#efe8e6" />
    <ellipse cx={27} cy={98} rx={11} ry={16} fill="#d8d0d0" />
    <ellipse cx={141} cy={98} rx={10} ry={16} fill="#d8d0d0" />
    <path d="M84 29c32 0 52 20 56 46 4 34-16 57-56 57S27 114 30 78c2-28 22-49 54-49z" fill="url(#shell)" />
    <path d="M62 50l46-1-3 6-45 1z" fill="#e58a4a" />
    <rect x={37} y={67} width={102} height={49} rx={24} fill="url(#visor)" />
    <path d="M60 97c2-12 18-12 20 0" fill="none" stroke="#fff" strokeWidth={5} />
    <rect x={102} y={80} width={15} height={20} rx={5} fill="#fff" />
  </svg>
);
const ShareIcon = () => (
  <svg width={37} height={37} viewBox="0 0 37 37" fill="none" stroke="#2b2b2b" strokeWidth={2.3} strokeLinecap="round" strokeLinejoin="round">
    <path d="M14.5 1.5H4A2.5 2.5 0 0 0 1.5 4V33A2.5 2.5 0 0 0 4 35.5H33A2.5 2.5 0 0 0 35.5 33V23M23 1.5H35.5V13M35.5 1.5L17.5 20" />
  </svg>
);
const SearchIcon = () => (
  <svg width={38} height={38} viewBox="0 0 38 38" fill="none" stroke="#2b2b2b" strokeWidth={2.3} strokeLinecap="round">
    <circle cx={18} cy={17.5} r={16.2} />
    <path d="M29.5 29l7 7.5" />
  </svg>
);
const Hint = () => (
  <HintWrap>
    <svg width={20} height={20} viewBox="0 0 20 20">
      <circle cx={10} cy={10} r={9} fill="none" stroke="#888" strokeWidth={1.3} />
      <g fill="#777">
        <circle cx={6} cy={10} r={1.2} />
        <circle cx={10} cy={10} r={1.2} />
        <circle cx={14} cy={10} r={1.2} />
      </g>
    </svg>
  </HintWrap>
);
const GearIcon = () => (
  <svg width={30} height={30} viewBox="0 0 30 30" fill="none" stroke={GREY} strokeWidth={1.9} strokeLinejoin="round">
    <path d="M10.8 2.3c2.2 2 6.2 2 8.4 0l4.3 2.5c-.6 3 1.3 6.3 4.2 7.2v6c-2.9.9-4.8 4.2-4.2 7.2l-4.3 2.5c-2.2-2-6.2-2-8.4 0l-4.3-2.5c.6-3-1.3-6.3-4.2-7.2v-6c2.9-.9 4.8-4.2 4.2-7.2z" />
    <circle cx={15} cy={15} r={4.8} />
  </svg>
);
const ExpandIcon = () => (
  <svg width={41} height={41} viewBox="0 0 123 123" fill="none" stroke={ORANGE} strokeWidth={6}>
    <path d="M33 59V35H59M34 36L56 57M90 66V90H64M89 89L67 68" />
  </svg>
);
const TradeIcon = () => (
  <svg width={40} height={36} viewBox="0 0 120 108" fill="none" stroke={GREY} strokeWidth={5}>
    <path d="M34 12A50 50 0 0 1 107 76M88 96A50 50 0 0 1 14 34" />
    <path d="M2 38l14-6 4 14M118 70l-14 6-4-14" />
    <path d="M42 30l18 20 18-20M60 50v32M42 52h36M42 66h36" />
  </svg>
);
const PostIcon = () => (
  <svg width={36} height={36} viewBox="0 0 108 108" fill="none" stroke={GREY} strokeWidth={5}>
    <path d="M72 6H16A12 12 0 0 0 6 16V90A12 12 0 0 0 18 102H88A12 12 0 0 0 100 90V34" />
    <path d="M40 68l6-13L86 15l6 6L52 61z" fill={GREY} strokeWidth={1} />
    <path d="M90 11l6-6 7 7-6 6z" fill={GREY} strokeWidth={1} />
  </svg>
);
const FunctionIcon = () => (
  <svg width={34} height={36} viewBox="0 0 102 108" fill="none" stroke={GREY} strokeWidth={5}>
    <rect x={6} y={9} width={38} height={38} rx={6} />
    <rect x={6} y={61} width={38} height={38} rx={6} />
    <rect x={57} y={61} width={38} height={38} rx={6} />
    <path d="M76 5l22 23-22 23-22-23z" strokeLinejoin="round" />
  </svg>
);
const DotsIcon = () => (
  <svg width={36} height={36} viewBox="0 0 36 36">
    <circle cx={18} cy={18} r={16} fill="none" stroke={GREY} strokeWidth={1.7} />
    <g fill={GREY}>
      <circle cx={11} cy={18} r={1.8} />
      <circle cx={18} cy={18} r={1.8} />
      <circle cx={25} cy={18} r={1.8} />
    </g>
  </svg>
);
const GoIcon = () => (
  <svg width={50} height={50} viewBox="0 0 50 50" fill="none" stroke="#fff" strokeWidth={3.2} strokeLinecap="round" strokeLinejoin="round">
    <path d="M14 25h22M27 15.5L36.5 25 27 34.5" />
  </svg>
);
const Arrow = ({ up, c }: { up?: boolean; c: string }) => (
  <svg width={14} height={16} viewBox="-1 0 14 16" fill="none" stroke={c} strokeWidth={1.7}>
    <path d={up ? "M6.5 15V2M1 7.5L6.5 1.8 12 7.5" : "M6.5 1V14M1 8.5l5.5 5.7L12 8.5"} />
  </svg>
);

/* ---------- sections ---------- */
const SELLS: [string, string, number][] = [
  ["9", "42.59", 108], ["8", "42.58", 40], ["7", "42.57", 49], ["6", "42.56", 27], ["5", "42.55", 47],
  ["4", "42.54", 24], ["3", "42.53", 6], ["2", "42.52", 76], ["1", "42.50", 327],
];
const BUYS: [string, string, number][] = [
  ["1", "42.49", 5], ["2", "42.48", 45], ["3", "42.47", 18], ["4", "42.46", 104], ["5", "42.45", 9],
  ["6", "42.42", 74], ["7", "42.41", 3], ["8", "42.40", 61], ["9", "42.39", 12], ["10", "42.38", 125],
];
const TRADES: { p: string; q: number; dir?: "up" | "down"; c: string }[] = [
  { p: "42.51", q: 106, c: RED },
  { p: "42.51", q: 33, c: RED },
  { p: "42.50", q: 32, dir: "down", c: GREEN },
  { p: "42.51", q: 36, dir: "up", c: RED },
  { p: "42.50", q: 257, dir: "down", c: GREEN },
];

const BookLevel = ({ side, n, price, qty }: { side: "卖" | "买"; n: string; price: string; qty: number }) => {
  const sell = side === "卖";
  const dot = qty === 327 ? BLUE : !sell && (qty > 100 || qty === 74) ? ORANGE : "#d3d6de";
  return (
    <Level>
      <LevelName><b>{side}</b>{n}</LevelName>
      <Price>{price}</Price>
      <Qty>
        {qty}
        <QtyBar $sell={sell} style={{ width: Math.max(1, qty * 0.19) }} />
      </Qty>
      <Dot $c={dot} />
    </Level>
  );
};

const PaneTitle = ({ name, size = 20, children }: { name: string; size?: number; children: React.ReactNode }) => (
  <PaneHead>
    <Picker $size={size}>
      <span>{name}</span>
      <Caret $w={9} $h={8} />
    </Picker>
    {children}
  </PaneHead>
);

export default function App() {
  return (
    <Screen>
      <Global />
      <StatusBar>
        <Clock>13:59</Clock>
        <StatusIcons />
      </StatusBar>

      <TitleBar>
        <TitleLeft>
          <BackIcon />
          <Brand>东方<br />财富</Brand>
        </TitleLeft>
        <TitleMid>
          <StockName>张江高科</StockName>
          <StockMeta>
            <Code>600895</Code>
            <Tag>融</Tag>
            <Tag>沪股通</Tag>
            <Tag>L2</Tag>
            <MetaCaret $w={12} $h={7} $c="#c8c8c8" />
          </StockMeta>
        </TitleMid>
        <TitleRight>
          <Robot />
          <ShareIcon />
          <SearchIcon />
        </TitleRight>
      </TitleBar>

      <Quote>
        <QuoteCol>
          <Last>42.50</Last>
          <QuoteCell $low><Val $c={RED} $left>0.31%</Val><Val $c={RED}>0.13</Val></QuoteCell>
          <QuoteCell>总值<Hint /><Val>658.2<Unit>亿</Unit></Val></QuoteCell>
        </QuoteCol>
        <QuoteCol>
          <QuoteCell>今开<Val $c={GREEN}>42.13</Val></QuoteCell>
          <QuoteCell>换手<Hint /><Val>5.06%</Val></QuoteCell>
          <QuoteCell>流值<Val>658.2<Unit>亿</Unit></Val></QuoteCell>
        </QuoteCol>
        <QuoteCol>
          <QuoteCell>最高<Val $c={RED}>43.43</Val></QuoteCell>
          <QuoteCell>总手<Val>78.42<Unit>万</Unit></Val></QuoteCell>
          <QuoteCell>市盈<Sup>静</Sup><Hint /><Val>67.00</Val></QuoteCell>
        </QuoteCol>
        <QuoteCol>
          <QuoteCell>最低<Val $c={GREEN}>42.01</Val></QuoteCell>
          <QuoteCell>金额<Val>33.45<Unit>亿</Unit></Val></QuoteCell>
          <QuoteCell><MoreButton>更多</MoreButton></QuoteCell>
        </QuoteCol>
      </Quote>

      <Tabs>
        <Tab $on>分时</Tab>
        <Tab>五日</Tab>
        <Tab>日 K</Tab>
        <Tab>周 K</Tab>
        <Tab>月 K</Tab>
        <Tab>更多<Corner /></Tab>
        <Tab><GearIcon /></Tab>
      </Tabs>

      <Summary>
        <SumItem $c={AMBER} $w={64}>均价：</SumItem>
        <SumItem $c={AMBER} $w={71}>42.65</SumItem>
        <SumItem $w={64}>最新：</SumItem>
        <SumItem $w={71}>42.50</SumItem>
        <SumItem $w={54}>0.13</SumItem>
        <SumItem $w={70}>0.31%</SumItem>
      </Summary>

      <Main>
        <Charts>
          <PriceChart />
          <PaneTitle name="分时博弈">
            <Stat $c={RED} $w={92.5}>超大:0.023</Stat>
            <Stat $c={AMBER} $w={102.5}>大户:-0.064</Stat>
            <Stat $c={NAVY} $w={93.5}>中户:0.064</Stat>
            <Stat $c={GREEN}>小户:-0.022</Stat>
          </PaneTitle>
          <FlowChart />
          <PaneTitle name="MACD" size={21}>
            <Stat $w={122}>DIF:-0.000 ↑</Stat>
            <Stat $c={AMBER} $w={131}>DEA:-0.038 ↑</Stat>
            <Stat $c="#e01be8">M:0.075 ↑</Stat>
          </PaneTitle>
          <MacdChart />
          <PaneTitle name="成交量">
            <Stat $w={74}>78.42 万</Stat>
            <Stat $w={131}>分时量: 1526 ↓</Stat>
            <Stat $w={46}>现量:</Stat>
            <Stat $c={GREEN}>257</Stat>
          </PaneTitle>
          <VolumeChart />
          <PaneTitle name="散户线">
            <Stat>152.197 ↓</Stat>
          </PaneTitle>
          <RetailChart />
          <Axis>
            <span>09:30</span>
            <span>11:30/13:00</span>
            <span>15:00</span>
          </Axis>
          <SliderTrack>
            <Handle><i /><i /><i /></Handle>
            <Handle><i /><i /><i /></Handle>
          </SliderTrack>
          <Expand><ExpandIcon /></Expand>
        </Charts>

        <Book>
          <BookTabs>
            <Pill>千档</Pill>
            <span>大单</span>
            <span>分价</span>
          </BookTabs>
          <BookLink>查看千档行情<span>&gt;</span></BookLink>
          <Asks>
            {SELLS.map(([n, p, q]) => <BookLevel key={n} side="卖" n={n} price={p} qty={q} />)}
          </Asks>
          <Ratio />
          <Bids>
            {BUYS.map(([n, p, q]) => <BookLevel key={n} side="买" n={n} price={p} qty={q} />)}
          </Bids>
          <TradesHead>分时成交<Caret $w={10} $h={6} $up /></TradesHead>
          {TRADES.map((t, i) => (
            <Trade key={i}>
              <span>13:59</span>
              <Right $c={RED}>{t.p}</Right>
              {t.dir ? <Arrow up={t.dir === "up"} c={t.c} /> : <span />}
              <Right $c={t.c}>{t.q}</Right>
            </Trade>
          ))}
        </Book>
      </Main>

      <Queue>
        <QueueSide>
          <QueueHead><span><b>卖</b>1</span><span>42.50</span><span>327</span></QueueHead>
          <QueueRow $c={GREEN}><span>322</span><span>5</span></QueueRow>
        </QueueSide>
        <QueueSide>
          <QueueHead><span><b>买</b>1</span><span>42.49</span><span>5</span></QueueHead>
          <QueueRow $c={RED}><span>1</span><span>4</span></QueueRow>
        </QueueSide>
      </Queue>

      <AskArea>
        <AskCard>
          <AskLogo>问Ai</AskLogo>
          <AskText>张江高科短期均线金叉，是否可以投资?</AskText>
          <Go><GoIcon /></Go>
        </AskCard>
      </AskArea>

      <BottomBar>
        <NavRow>
          <IndexCell>
            <Caret $w={13} $h={7} $up />
            <IndexValue>3889.25</IndexValue>
            <IndexLine><span>上证</span>0.65%</IndexLine>
          </IndexCell>
          <NavItem><TradeIcon />交易</NavItem>
          <NavItem><PostIcon />发帖</NavItem>
          <NavItem><FunctionIcon />功能</NavItem>
          <NavItem><DotsIcon />设自选</NavItem>
        </NavRow>
        <HomeIndicator />
      </BottomBar>
    </Screen>
  );
}
